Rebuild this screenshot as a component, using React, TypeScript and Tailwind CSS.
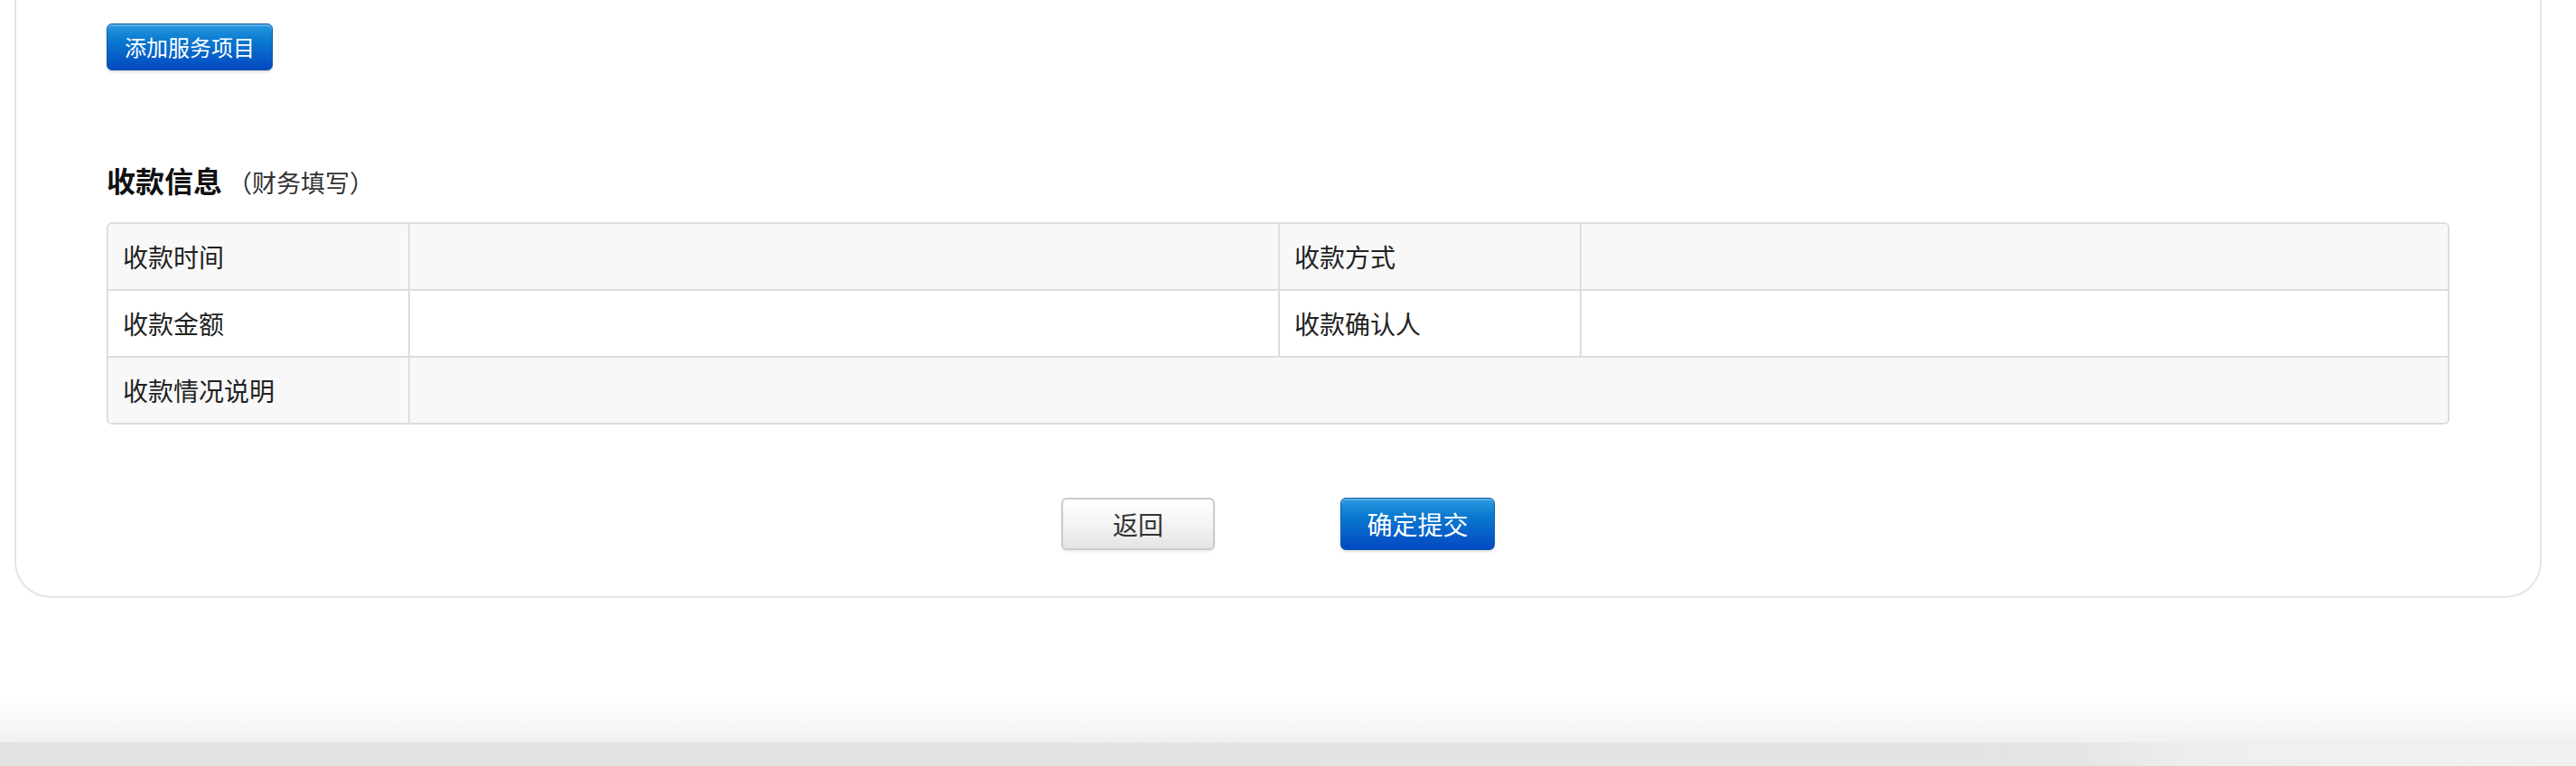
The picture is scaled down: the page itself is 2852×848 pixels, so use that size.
import React from "react";

const font = { fontFamily: '"Noto Sans CJK SC", "Noto Sans", sans-serif' };

function Label({ children, className = "" }: { children: React.ReactNode; className?: string }) {
  return (
    <div className={`flex items-center pl-[16px] text-[28px] leading-none text-[#222222] ${className}`}>
      {children}
    </div>
  );
}

export default function App() {
  return (
    <div className="w-[2852px] h-[848px] bg-white flex flex-col overflow-hidden" style={font}>
      {/* Card */}
      <div className="ml-4 w-[2798px] border-2 border-t-0 border-[#e7e4e6] rounded-b-[40px] bg-white px-[100px] pt-[26px] pb-[51px] flex flex-col">
        <div>
          <button className="h-[52px] px-[19px] rounded-[6px] border border-[#0a5aa8] bg-[linear-gradient(to_bottom,#2a98de_0%,#0a7ad0_35%,#0448c2_100%)] shadow-[inset_0_2px_0_rgba(255,255,255,0.25),0_2px_3px_rgba(0,0,0,0.12)] text-white text-[24px] leading-none">
            添加服务项目
          </button>
        </div>

        <div className="mt-[105px] flex items-baseline">
          <span className="text-[32px] leading-none font-bold text-[#111111]">收款信息</span>
          <span className="ml-[6px] text-[27px] leading-none text-[#333333]">（财务填写）</span>
        </div>

        <div className="mt-[31px] border-2 border-[#dddddd] rounded-[6px] overflow-hidden">
          <div className="grid grid-cols-[332px_963px_334px_1fr] h-[72px] bg-[#f8f8f8]">
            <Label>收款时间</Label>
            <div className="border-l-2 border-[#dddddd]" />
            <Label className="border-l-2 border-[#dddddd]">收款方式</Label>
            <div className="border-l-2 border-[#dddddd]" />
          </div>
          <div className="grid grid-cols-[332px_963px_334px_1fr] h-[74px] border-t-2 border-[#dddddd] bg-white">
            <Label>收款金额</Label>
            <div className="border-l-2 border-[#dddddd]" />
            <Label className="border-l-2 border-[#dddddd]">收款确认人</Label>
            <div className="border-l-2 border-[#dddddd]" />
          </div>
          <div className="grid grid-cols-[332px_1fr] h-[74px] border-t-2 border-[#dddddd] bg-[#f8f8f8]">
            <Label>收款情况说明</Label>
            <div className="border-l-2 border-[#dddddd]" />
          </div>
        </div>

        <div className="mt-[81px] flex justify-center gap-[139px]">
          <button className="w-[170px] h-[58px] rounded-[6px] border-2 border-[#cacaca] bg-[linear-gradient(to_bottom,#ffffff_0%,#f4f4f4_50%,#e4e4e4_100%)] shadow-[0_2px_3px_rgba(0,0,0,0.08)] text-[28px] leading-none text-[#333333]">
            返回
          </button>
          <button className="w-[171px] h-[58px] rounded-[6px] border border-[#0a5aa8] bg-[linear-gradient(to_bottom,#2a98de_0%,#0a7ad0_35%,#0448c2_100%)] shadow-[inset_0_2px_0_rgba(255,255,255,0.25),0_2px_3px_rgba(0,0,0,0.12)] text-[28px] leading-none text-white">
            确定提交
          </button>
        </div>
      </div>

      {/* Footer fade */}
      <div className="h-[111px] bg-white" />
      <div className="h-[49px] bg-[linear-gradient(to_bottom,#ffffff_0%,#f7f7f7_60%,#f0f0f0_100%)]" />
      <div className="flex-1 bg-[linear-gradient(to_right,#e2e2e2_0%,#e4e4e4_80%,#efefef_86%,#f0f0f0_100%)]" />
    </div>
  );
}
